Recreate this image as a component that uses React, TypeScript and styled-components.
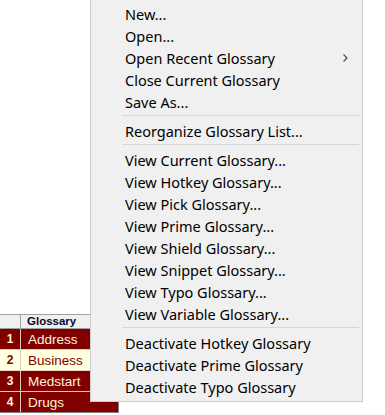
import React from "react";
import styled, { createGlobalStyle } from "styled-components";

type MenuEntry = { label: string; submenu?: boolean } | "sep";

const menuItems: MenuEntry[] = [
  { label: "New..." },
  { label: "Open..." },
  { label: "Open Recent Glossary", submenu: true },
  { label: "Close Current Glossary" },
  { label: "Save As..." },
  "sep",
  { label: "Reorganize Glossary List..." },
  "sep",
  { label: "View Current Glossary..." },
  { label: "View Hotkey Glossary..." },
  { label: "View Pick Glossary..." },
  { label: "View Prime Glossary..." },
  { label: "View Shield Glossary..." },
  { label: "View Snippet Glossary..." },
  { label: "View Typo Glossary..." },
  { label: "View Variable Glossary..." },
  "sep",
  { label: "Deactivate Hotkey Glossary" },
  { label: "Deactivate Prime Glossary" },
  { label: "Deactivate Typo Glossary" }
];

const rows = [
  { n: 1, name: "Address", selected: false },
  { n: 2, name: "Business", selected: true },
  { n: 3, name: "Medstart", selected: false },
  { n: 4, name: "Drugs", selected: false }
];

const App = () => {
  return (
    <>
      <GlobalStyle />
      <Page>
        <Grid>
          <HeaderRow>
            <CornerCell />
            <HeaderCell>Glossary</HeaderCell>
          </HeaderRow>
          {rows.map((row) => (
            <DataRow key={row.n} selected={row.selected}>
              <NumCell>{row.n}</NumCell>
              <NameCell>{row.name}</NameCell>
            </DataRow>
          ))}
        </Grid>
        <Menu>
          {menuItems.map((item, i) =>
            item === "sep" ? (
              <Separator key={i} />
            ) : (
              <Item key={i}>
                <span>{item.label}</span>
                {item.submenu && (
                  <Arrow width="5" height="8" viewBox="0 0 5 8">
                    <path d="M0.5 0.5 L4 4 L0.5 7.5" fill="none" stroke="#444" strokeWidth="1.1" />
                  </Arrow>
                )}
              </Item>
            )
          )}
        </Menu>
      </Page>
    </>
  );
};

const GlobalStyle = createGlobalStyle`
  html, body {
    margin: 0;
    padding: 0;
    background: #ffffff;
  }
`;

const Page = styled.div`
  position: relative;
  width: 385px;
  height: 415px;
  overflow: hidden;
  padding-top: 314px;
  box-sizing: border-box;
`;

const Grid = styled.div`
  width: 119px;
  display: flex;
  flex-direction: column;
  font-family: "Liberation Sans", Arial, sans-serif;
`;

const HeaderRow = styled.div`
  display: grid;
  grid-template-columns: 21px 98px;
  height: 14px;
  background: #f0f0f0;
  border-top: 1px solid #a0a0a0;
`;

const CornerCell = styled.div`
  border-right: 1px solid #a0a0a0;
  border-bottom: 1px solid #a0a0a0;
`;

const HeaderCell = styled.div`
  border-bottom: 1px solid #a0a0a0;
  border-right: 1px solid #a0a0a0;
  font-size: 11.5px;
  font-weight: bold;
  color: #0a0a28;
  line-height: 13px;
  padding-left: 6px;
`;

const DataRow = styled.div<{ selected: boolean }>`
  display: grid;
  grid-template-columns: 21px 98px;
  height: 21px;
  background: ${(p) => (p.selected ? "#ffffe1" : "#800000")};
  color: ${(p) => (p.selected ? "#800000" : "#fff4dc")};
  border-bottom: 1px solid ${(p) => (p.selected ? "#e8d8c8" : "#d8c8c0")};
  box-sizing: border-box;
  &:last-child {
    border-bottom: 1px solid #808080;
  }
`;

const NumCell = styled.div`
  border-right: 1px solid #d8c8c0;
  font-size: 12px;
  font-weight: bold;
  display: flex;
  align-items: center;
  justify-content: center;
`;

const NameCell = styled.div`
  font-size: 13.5px;
  display: flex;
  align-items: center;
  padding-left: 7px;
  border-right: 1px solid #808080;
`;

const Menu = styled.div`
  position: absolute;
  left: 90px;
  top: -1px;
  width: 273px;
  box-sizing: border-box;
  padding: 3px 2px 3px 2px;
  background: #f0f0f0;
  border: 1px solid #cccccc;
  font-family: "Noto Sans", "Open Sans", sans-serif;
  font-size: 14.5px;
  color: #000;
`;

const Item = styled.div`
  height: 22px;
  display: flex;
  align-items: center;
  justify-content: space-between;
  padding-left: 32px;
  padding-right: 12px;
  white-space: nowrap;
`;

const Arrow = styled.svg`
  display: block;
`;

const Separator = styled.div`
  height: 7px;
  margin-left: 29px;
  position: relative;
  &::after {
    content: "";
    position: absolute;
    left: 0;
    right: 1px;
    top: 2px;
    height: 1px;
    background: #d7d7d7;
  }
`;

export default App;
